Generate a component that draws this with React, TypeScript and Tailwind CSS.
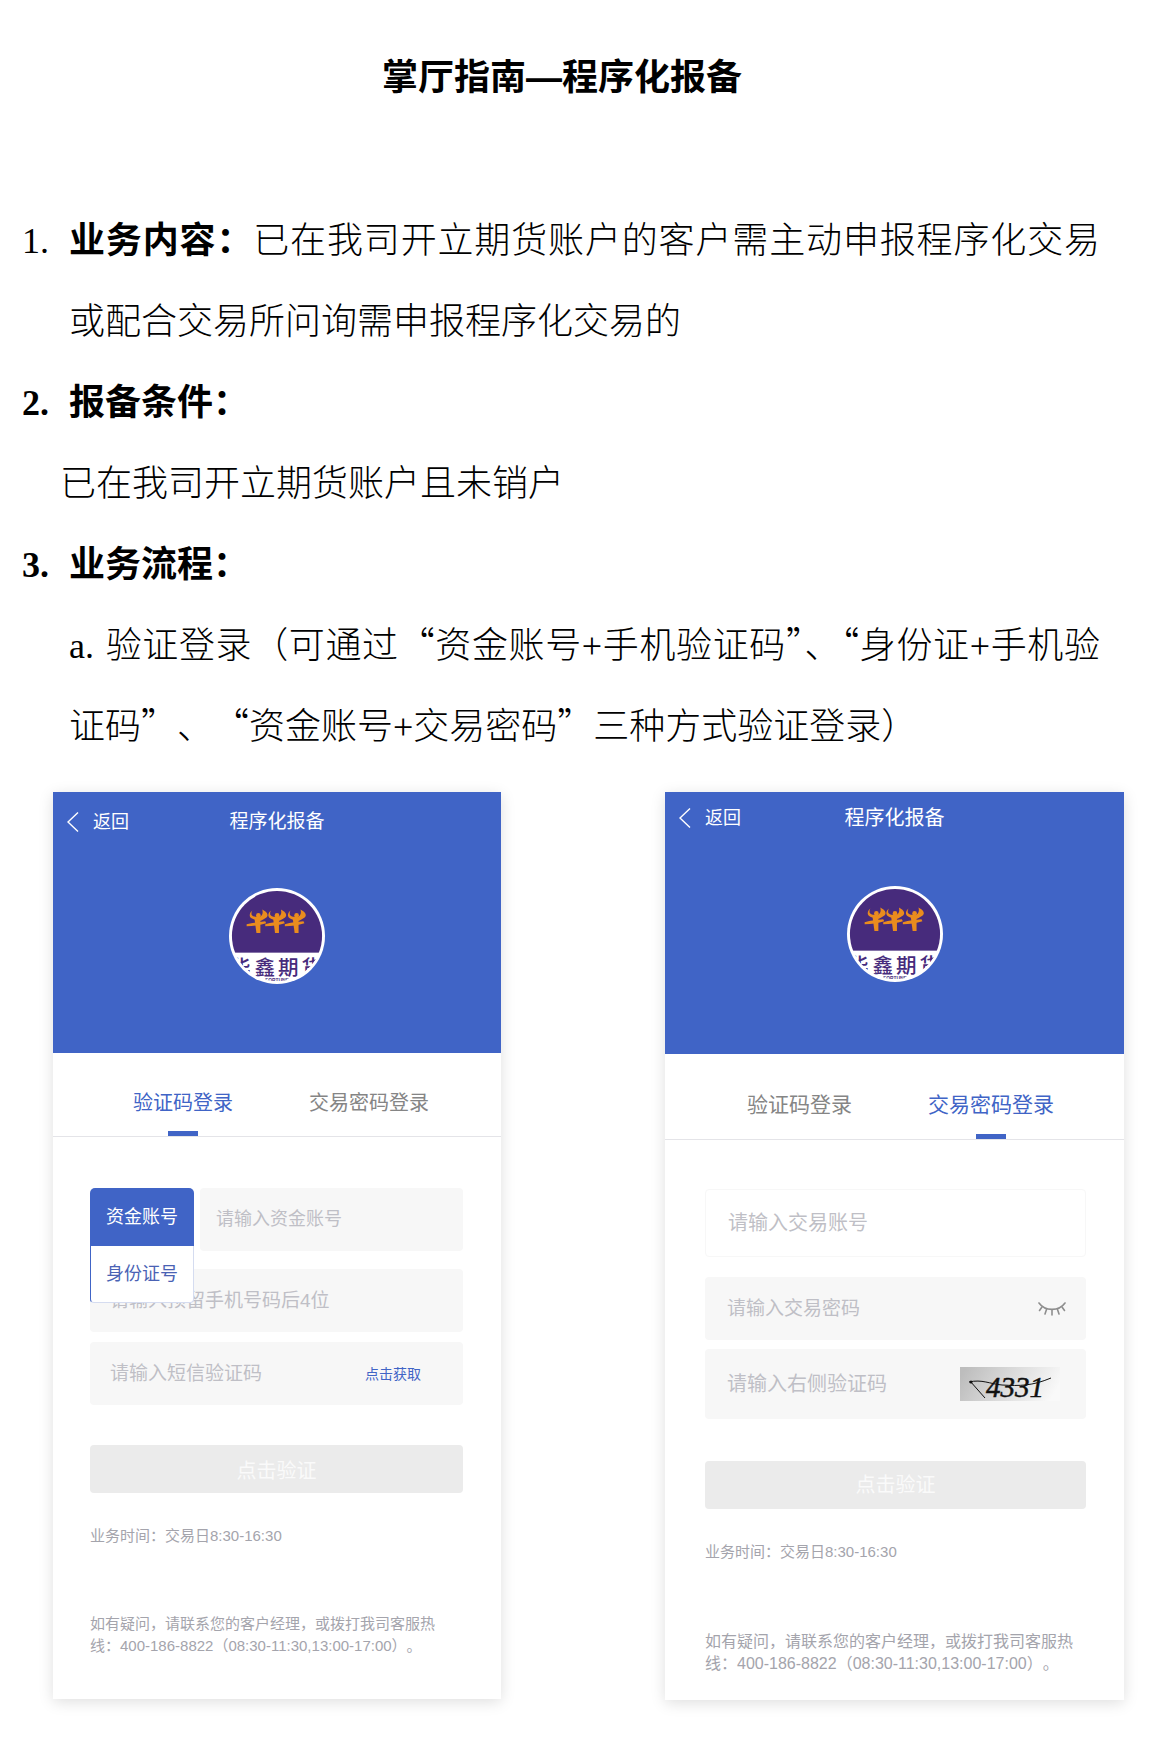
import { ReactNode } from "react";

const CARD_TITLE = "程序化报备";
const BACK = "返回";
const SUBMIT = "点击验证";
const HOURS = "业务时间：交易日8:30-16:30";
const HELP = "如有疑问，请联系您的客户经理，或拨打我司客服热线：400-186-8822（08:30-11:30,13:00-17:00）。";
const TABS = ["验证码登录", "交易密码登录"];

interface PhoneCardProps {
  id: string;
  activeTab: number;
  headerClass: string;
  barClass: string;
  tabClass: string;
  children: ReactNode;
}

interface FieldProps {
  id: string;
  placeholder: string;
  type?: string;
  className?: string;
  inputClass?: string;
  children?: ReactNode;
}

// one dancing figure of the logo
const Figure = ({ x }: { x: number }) => (
  <g transform={`translate(${x} 33)`} fill="#ea8c1e">
    <path d="M-5 -10 C-8 -8 -9 -4 -6 -2 C-3 0 1 0 3 -1 L2 -4 C-2 -3 -5 -4 -6 -6 C-6 -8 -6 -9 -5 -10 Z" />
    <path d="M5 -11 C11 -8 12 -4 8 -2 C5 0 3 1 1 1 L1 -3 C5 -4 6 -7 5 -11 Z" />
    <path d="M-11 4 C-5 2 2 2 8 1 L9 3 C3 5 -4 6 -11 6 Z" />
    <path d="M-3 -2 L3 -2 L3 13 L-1 13 Z" />
    <circle cx="1" cy="-5" r="2.400" />
  </g>
);

// round company logo, the name runs out of the circle on both sides
const Logo = ({ id }: { id: string }) => (
  <svg viewBox="0 0 98 98" className="block size-24" role="img" aria-label="华鑫期货">
    <defs>
      <clipPath id={`${id}-clip`}>
        <circle cx="49" cy="49" r="46" />
      </clipPath>
    </defs>
    <circle cx="49" cy="49" r="49" fill="#ffffff" />
    <g clipPath={`url(#${id}-clip)`}>
      <rect x="0" y="0" width="98" height="66" fill="#472b7c" />
      <Figure x={29} />
      <Figure x={48} />
      <Figure x={68} />
      <text x="1 26 50 74" y="89" fontSize="21" fontWeight="500" fill="#472b7c" fontFamily="'Noto Sans CJK SC', sans-serif">
        华鑫期货
      </text>
      <text x="49" y="96" textAnchor="middle" fontSize="5" fontWeight="700" fill="#472b7c" fontFamily="'Liberation Sans', sans-serif">
        FORTUNE
      </text>
    </g>
  </svg>
);

const Captcha = () => (
  <svg viewBox="0 0 100 34" className="block h-[34px] w-[100px] overflow-visible" role="img" aria-label="4331">
    <defs>
      <linearGradient id="captcha-bg" x1="0" y1="0.3" x2="1" y2="0.5">
        <stop offset="0" stopColor="#bdbdbd" />
        <stop offset="0.5" stopColor="#dcdcdc" />
        <stop offset="1" stopColor="#f9f9f9" />
      </linearGradient>
    </defs>
    <rect width="100" height="34" fill="url(#captcha-bg)" />
    <text x="26" y="30" fontSize="29" fontStyle="italic" fill="#111111" stroke="#111111" strokeWidth="0.5" fontFamily="'Liberation Serif', serif">
      4331
    </text>
    <path d="M9 15 C22 12 30 17 42 18 C60 19 72 19 91 11" fill="none" stroke="#111111" strokeWidth="1" />
    <path d="M10 14 L25 31" fill="none" stroke="#111111" strokeWidth="1" />
    <circle cx="11" cy="15" r="1.500" fill="#111111" />
  </svg>
);

const ClosedEye = () => (
  <svg viewBox="0 0 28 16" className="block h-4 w-7" fill="none" stroke="#8e8e8e" strokeWidth="1.6" strokeLinecap="round">
    <path d="M1 2 C7 10.500 21 10.500 27 2" />
    <path d="M4 6 L1.500 9.500 M8.500 8.500 L7 13 M14 9.200 L14 14 M19.500 8.500 L21 13 M24 6 L26.500 9.500" />
  </svg>
);

const Field = ({ id, placeholder, type = "text", className = "h-[63px] bg-[#f7f7f7]", inputClass = "pl-5 text-[19px]", children }: FieldProps) => (
  <div className={`flex min-w-0 items-center rounded ${className}`}>
    <input
      id={id}
      type={type}
      aria-label={placeholder}
      placeholder={placeholder}
      className={`h-full min-w-0 flex-1 bg-transparent outline-none placeholder:text-[#bfbfc6] ${inputClass}`}
    />
    {children}
  </div>
);

// blue header with the logo, the two login tabs and the form below
const PhoneCard = ({ id, activeTab, headerClass, barClass, tabClass, children }: PhoneCardProps) => (
  <section className="bg-white shadow-[0_3px_14px_rgba(0,0,0,0.13)]">
    <header className={`flex flex-col items-center bg-[#4064c6] text-white ${headerClass}`}>
      <div className={`grid w-full grid-cols-[1fr_auto_1fr] items-center ${barClass}`}>
        <button type="button" className="flex items-center gap-[14px] pl-[14px] text-lg">
          <svg viewBox="0 0 12 20" className="h-5 w-3" fill="none" stroke="#ffffff" strokeWidth="1.4">
            <path d="M11 0.500 L1 10 L11 19.500" />
          </svg>
          {BACK}
        </button>
        <h2>{CARD_TITLE}</h2>
      </div>
      <Logo id={id} />
    </header>
    <div role="tablist" className={`flex justify-center gap-[76px] border-b border-[#e4e4e8] ${tabClass}`}>
      {TABS.map((tab, index) => (
        <button
          key={tab}
          type="button"
          role="tab"
          aria-selected={index === activeTab}
          className={`relative h-full pt-4 ${index === activeTab ? "text-[#4064c6]" : "text-[#858585]"}`}
        >
          {tab}
          {index === activeTab && <span className="absolute bottom-0 left-1/2 h-[5px] w-[30px] -translate-x-1/2 bg-[#4064c6]" />}
        </button>
      ))}
    </div>
    {children}
  </section>
);

const CodeLogin = () => (
  <PhoneCard id="code" activeTab={0} headerClass="h-[261px]" barClass="mb-[36px] h-[60px] text-[19px]" tabClass="h-[84px] pl-2 text-xl">
    <form className="flex flex-col pt-[51px] pr-[38px] pb-[42px] pl-[37px]">
      <div className="mb-[18px] flex gap-1.5">
        <div className="relative w-[104px] shrink-0 text-lg">
          <button type="button" aria-expanded="true" className="h-[58px] w-full rounded-t-[5px] bg-[#4064c6] text-white">
            资金账号
          </button>
          <button
            type="button"
            className="absolute top-[58px] left-0 h-[57px] w-full rounded-b border border-t-0 border-[#d5dcf0] border-l-[#4064c6] bg-white text-[#4a62b4]"
          >
            身份证号
          </button>
        </div>
        <Field id="fund-account" placeholder="请输入资金账号" className="h-[63px] flex-1 bg-[#f7f7f7]" inputClass="pl-4 text-lg" />
      </div>
      <Field id="phone-tail" placeholder="请输入预留手机号码后4位" />
      <Field id="sms-code" placeholder="请输入短信验证码" className="mt-[10px] h-[63px] bg-[#f7f7f7]">
        <button type="button" className="pr-[42px] text-sm text-[#4064c6]">
          点击获取
        </button>
      </Field>
      <button type="submit" className="mt-10 h-12 rounded bg-[#ebebeb] pt-1 text-xl text-[#fafafa]">
        {SUBMIT}
      </button>
      <p className="mt-8 text-[15px] leading-[22px] text-[#a4a4ac]">{HOURS}</p>
      <p className="mt-[66px] text-[15px] leading-[22px] text-[#a4a4ac] [text-spacing-trim:space-all]">{HELP}</p>
    </form>
  </PhoneCard>
);

const PasswordLogin = () => (
  <PhoneCard id="password" activeTab={1} headerClass="h-[262px]" barClass="mb-[42px] h-[52px] text-xl" tabClass="h-[86px] pl-3 text-[21px]">
    <form className="flex flex-col pt-[49px] pr-[38px] pb-[25px] pl-[40px]">
      <Field
        id="trade-account"
        placeholder="请输入交易账号"
        className="h-[68px] border border-[#f7f7f7] bg-white"
        inputClass="pl-[22px] text-xl"
      />
      <Field
        id="trade-password"
        type="password"
        placeholder="请输入交易密码"
        className="mt-5 h-[63px] bg-[#f7f7f7]"
        inputClass="pl-[22px] text-[19px] placeholder:text-[#a9a9a9]"
      >
        <button type="button" aria-label="显示密码" className="pr-5">
          <ClosedEye />
        </button>
      </Field>
      <Field id="captcha-code" placeholder="请输入右侧验证码" className="mt-[9px] h-[70px] bg-[#f7f7f7]" inputClass="pl-[22px] text-xl">
        <div className="pr-[26px]">
          <Captcha />
        </div>
      </Field>
      <button type="submit" className="mt-[42px] h-12 rounded bg-[#ebebeb] text-xl text-[#fafafa]">
        {SUBMIT}
      </button>
      <p className="mt-8 text-[15px] leading-[22px] text-[#a4a4ac]">{HOURS}</p>
      <p className="mt-[68px] text-base leading-[22px] text-[#a4a4ac] [text-spacing-trim:space-all]">{HELP}</p>
    </form>
  </PhoneCard>
);

// half-width characters of the document are set in the serif face
const Latin = ({ children, className = "" }: { children: ReactNode; className?: string }) => (
  <span className={`font-['Liberation_Serif',serif] leading-none ${className}`}>{children}</span>
);

const App = () => (
  <main lang="zh-CN" className="min-h-screen bg-white pt-[34px] pb-12 text-black">
    <h1 className="mb-[82px] pr-[50px] text-center font-['Noto_Sans_CJK_SC',sans-serif] text-4xl leading-[81px] font-bold">
      掌厅指南<span className="font-['Liberation_Sans',sans-serif] leading-none">—</span>程序化报备
    </h1>

    <ol className="pr-[74px] pl-[22px] text-justify font-['Noto_Sans_CJK_SC',sans-serif] text-4xl leading-[81px] font-light">
      <li className="flex items-baseline">
        <Latin className="w-[47px] shrink-0">1.</Latin>
        <p>
          <strong className="font-bold">业务内容：</strong>已在我司开立期货账户的客户需主动申报程序化交易或配合交易所问询需申报程序化交易的
        </p>
      </li>
      <li>
        <h3 className="flex items-baseline font-bold">
          <Latin className="w-[47px] shrink-0">2.</Latin>报备条件：
        </h3>
        <p className="pl-[38px]">已在我司开立期货账户且未销户</p>
      </li>
      <li>
        <h3 className="flex items-baseline font-bold">
          <Latin className="w-[47px] shrink-0">3.</Latin>业务流程：
        </h3>
        <p className="pl-[47px]">
          <Latin className="inline-block w-9">a.</Latin>验证登录（可通过“资金账号<Latin>+</Latin>手机验证码”、“身份证<Latin>+</Latin>手机验
          <span className="[text-spacing-trim:space-all]">
            证码”、“资金账号<Latin>+</Latin>交易密码”三种方式验证登录）
          </span>
        </p>
      </li>
    </ol>

    <div className="mt-7 grid grid-cols-[minmax(0,448fr)_minmax(0,459fr)] items-start gap-[164px] pr-[50px] pl-[53px] font-['Liberation_Sans','Noto_Sans_CJK_SC',sans-serif]">
      <CodeLogin />
      <PasswordLogin />
    </div>
  </main>
);

export default App;
